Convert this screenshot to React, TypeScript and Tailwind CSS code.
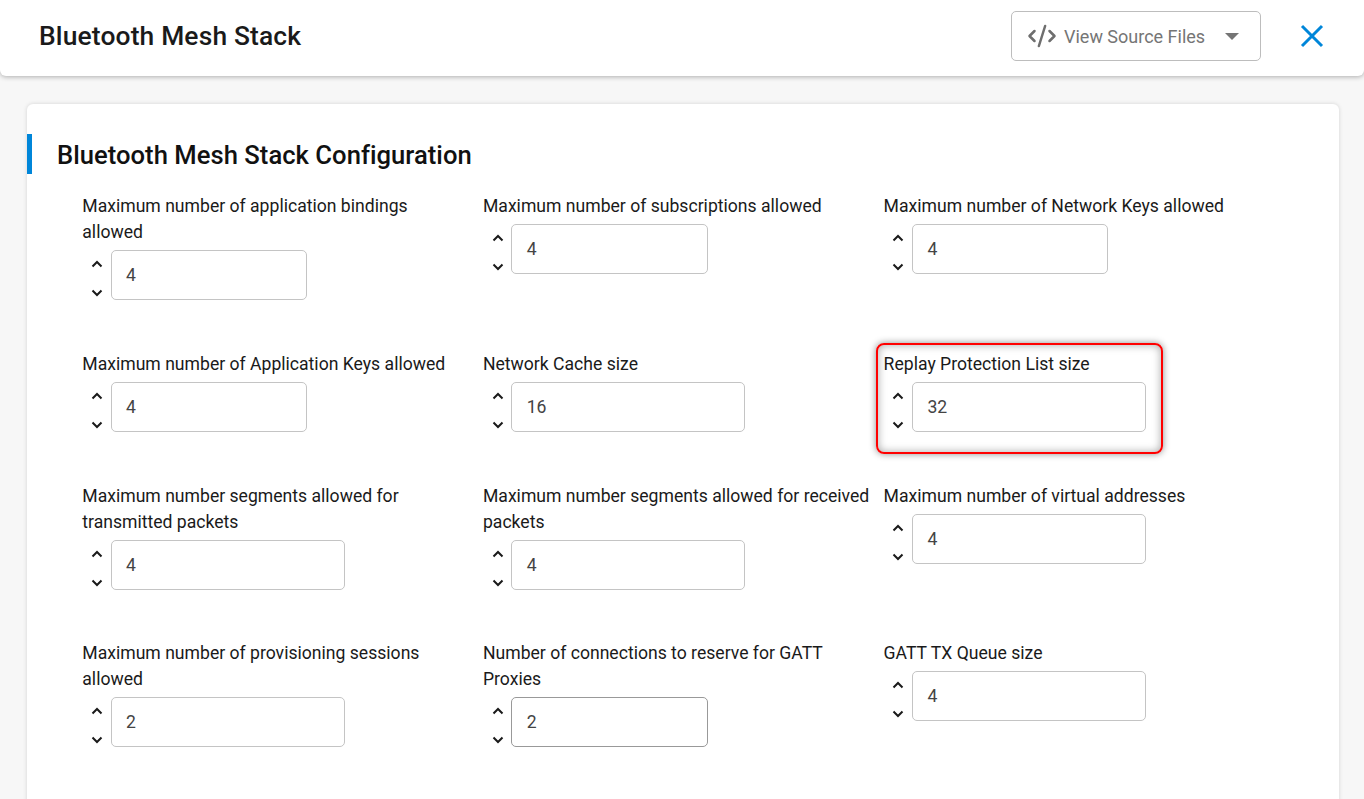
import { CodeXml } from "lucide-react";

type Field = {
  label: string;
  value: number;
  width: string;
  hover?: boolean;
  highlight?: boolean;
};

const fields: Field[] = [
  { label: "Maximum number of application bindings allowed", value: 4, width: "w-[196px]" },
  { label: "Maximum number of subscriptions allowed", value: 4, width: "w-[197px]" },
  { label: "Maximum number of Network Keys allowed", value: 4, width: "w-[196px]" },
  { label: "Maximum number of Application Keys allowed", value: 4, width: "w-[196px]" },
  { label: "Network Cache size", value: 16, width: "w-[234px]" },
  { label: "Replay Protection List size", value: 32, width: "w-[234px]", highlight: true },
  { label: "Maximum number segments allowed for transmitted packets", value: 4, width: "w-[234px]" },
  { label: "Maximum number segments allowed for received packets", value: 4, width: "w-[234px]" },
  { label: "Maximum number of virtual addresses", value: 4, width: "w-[234px]" },
  { label: "Maximum number of provisioning sessions allowed", value: 2, width: "w-[234px]" },
  { label: "Number of connections to reserve for GATT Proxies", value: 2, width: "w-[197px]", hover: true },
  { label: "GATT TX Queue size", value: 4, width: "w-[234px]" },
];

function Chevron({ up }: { up?: boolean }) {
  return (
    <svg width="12" height="8" viewBox="0 0 12 8" fill="none" stroke="#1a1a1a" strokeWidth="2">
      <path d={up ? "M1.5 6.5 6 2l4.5 4.5" : "M1.5 1.5 6 6l4.5-4.5"} />
    </svg>
  );
}

function NumberField({ field }: { field: Field }) {
  return (
    <div className="relative">
      {field.highlight && (
        <div className="absolute -left-[7.5px] -top-[7.5px] w-[286.5px] h-[110.5px] rounded-lg border-2 border-[#f00] shadow-[0_0_7px_rgba(0,0,0,0.45),inset_0_0_8px_rgba(0,0,0,0.35)] pointer-events-none" />
      )}
      <div className="text-[17.6px] leading-[26px] text-[#1a1a1a] pr-[12px]">{field.label}</div>
      <div className="flex items-center mt-[5px]">
        <div className="w-[28.4px] h-[50px] flex flex-col items-center justify-between pt-[10px] pb-[3px] pl-[1px]">
          <Chevron up />
          <Chevron />
        </div>
        <div
          className={`${field.width} h-[50px] rounded-[5px] border bg-white flex items-center pl-[14.4px] pt-[0.5px] text-[17.6px] text-[#444] ${
            field.hover ? "border-[#999]" : "border-[#c4c4c4]"
          }`}
        >
          {field.value}
        </div>
      </div>
    </div>
  );
}

export default function App() {
  return (
    <div className="h-[799px] overflow-hidden bg-[#f7f7f7] font-['Roboto',sans-serif]">
      <header className="h-[76px] bg-white rounded-b-md shadow-[0_1px_5px_rgba(0,0,0,0.3)] flex items-center pl-[39px] pr-[40px] pb-[4px]">
        <h1 className="text-[26.4px] font-medium tracking-[0.15px] pt-[2px] text-[#1a1a1a] flex-1">Bluetooth Mesh Stack</h1>
        <button className="w-[250px] h-[50px] rounded-[5px] border border-[#bdbdbd] flex items-center pl-[15px] text-[18px] text-[#757575]">
          <CodeXml size={30} strokeWidth={2} color="#6e6e6e" />
          <span className="ml-[7px]">View Source Files</span>
          <svg className="ml-[20px]" width="14" height="7" viewBox="0 0 14 7" fill="#757575">
            <path d="M0 0h14L7 7z" />
          </svg>
        </button>
        <svg className="ml-[39px]" width="24" height="24" viewBox="0 0 24 24" fill="none" stroke="#0086d9" strokeWidth="3">
          <path d="M2 2l20 20M22 2 2 22" />
        </svg>
      </header>

      <main className="mt-[28px] ml-[27px] mr-[25px] h-[800px] bg-white rounded-md shadow-[0_0_4px_rgba(0,0,0,0.15)] pt-[30px]">
        <div className="h-[40px] border-l-[5px] border-[#0086d9] pl-[25px] flex items-center">
          <h2 className="text-[25.6px] font-medium tracking-[0.03px] pt-[3px] text-[#111]">Bluetooth Mesh Stack Configuration</h2>
        </div>
        <div className="grid grid-cols-[400.67px_400.67px_400.67px] gap-y-[50.67px] pl-[55.3px] pt-[19.3px]">
          {fields.map((field) => (
            <NumberField key={field.label} field={field} />
          ))}
        </div>
      </main>
    </div>
  );
}
